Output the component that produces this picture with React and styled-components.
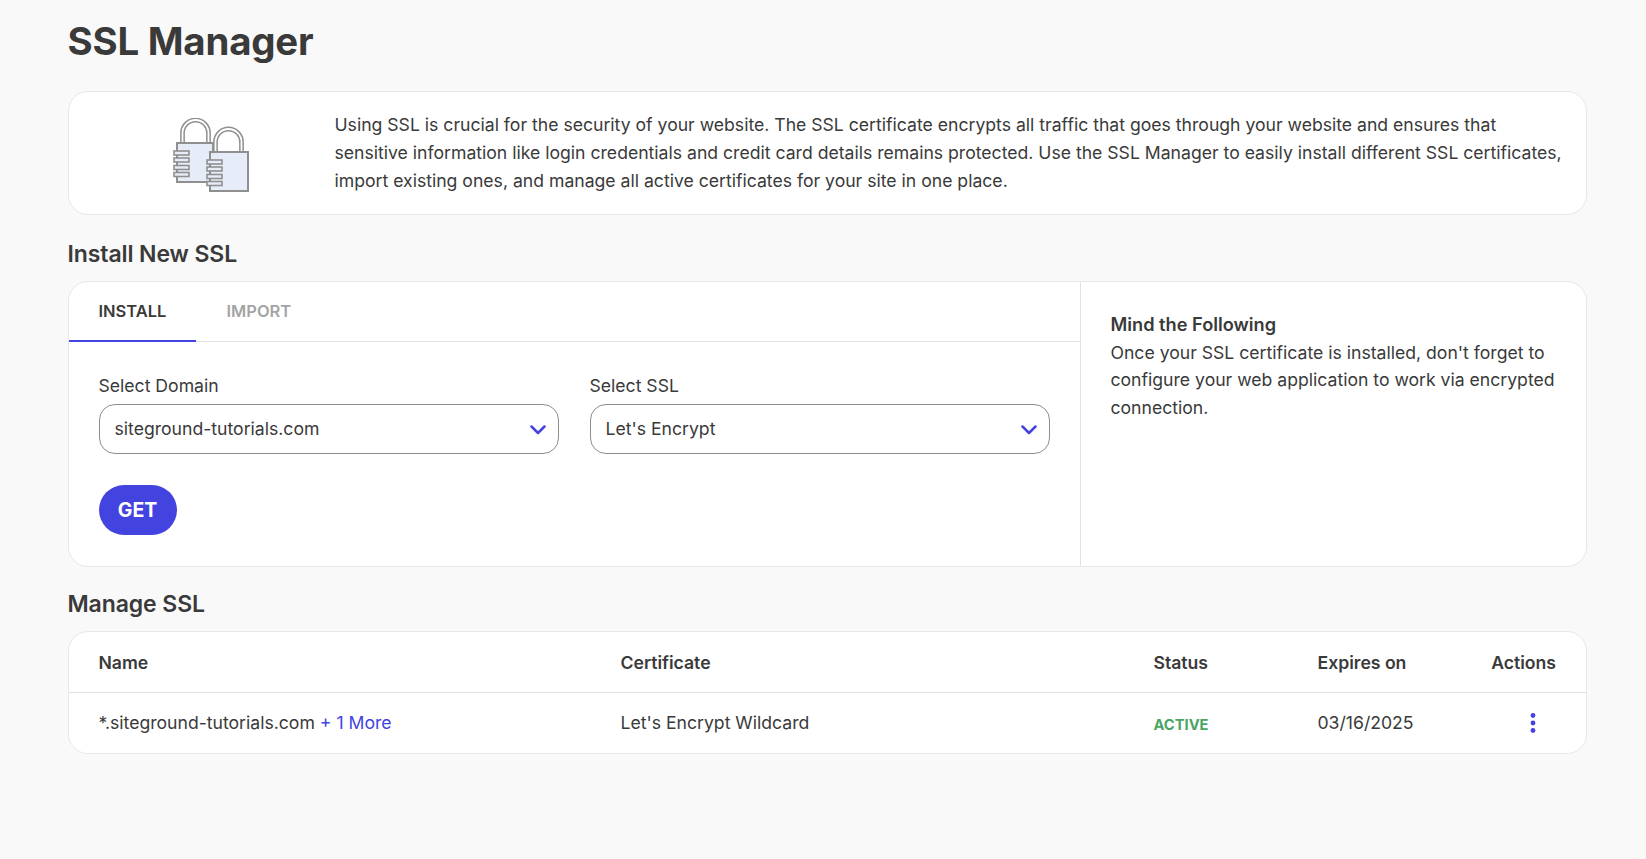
import React from 'react';
import styled, { createGlobalStyle } from 'styled-components';

const GlobalStyle = createGlobalStyle`
  html, body {
    margin: 0;
    background: #f9f9f9;
    color: #3a3a3a;
    font-family: Inter, "Liberation Sans", sans-serif;
    font-size: 17.63px;
  }
  * {
    box-sizing: border-box;
  }
`;

const Page = styled.main`
  width: 1646px;
  min-height: 859px;
  padding: 15px 59px 0 67.5px;
`;

const Title = styled.h1`
  margin: 0 0 24px;
  height: 52px;
  font-size: 38.4px;
  line-height: 52px;
  font-weight: 700;
  letter-spacing: -0.2px;
`;

const SectionTitle = styled.h2`
  margin: 0;
  height: 64px;
  padding-top: 22px;
  font-size: 23px;
  line-height: 30px;
  font-weight: 600;
  letter-spacing: -0.1px;
`;

const Card = styled.section`
  background: #fff;
  border: 1px solid #e8e8e8;
  border-radius: 20px;
  overflow: hidden;
`;

const IntroCard = styled(Card)`
  display: flex;
  align-items: center;
  height: 124px;
  margin-bottom: 2px;
`;

const IntroIcon = styled.div`
  flex: 0 0 266px;
  display: flex;
  justify-content: center;
  padding: 7px 0 0 20px;
`;

const IntroText = styled.p`
  margin: 0;
  padding-right: 20px;
  line-height: 27.7px;
`;

const InstallCard = styled(Card)`
  display: flex;
  height: 286px;
`;

const InstallMain = styled.div`
  flex: 0 0 1012px;
  border-right: 1px solid #e2e2e2;
`;

const Tabs = styled.div`
  display: flex;
  height: 60px;
  border-bottom: 1px solid #e2e2e2;
`;

const Tab = styled.div`
  height: 60px;
  padding: 0 30px;
  display: flex;
  align-items: center;
  font-size: 16.5px;
  font-weight: 600;
  color: ${p => (p.$active ? '#3a3a3a' : '#a4a4a4')};
  border-bottom: 2px solid ${p => (p.$active ? '#4343e0' : 'transparent')};
`;

const Form = styled.div`
  padding: 30px 30px 0;
`;

const Fields = styled.div`
  display: grid;
  grid-template-columns: 1fr 1fr;
  gap: 31px;
`;

const Label = styled.div`
  height: 32px;
  line-height: 28px;
`;

const Select = styled.div`
  height: 50px;
  padding: 0 12px 1px 15px;
  display: flex;
  align-items: center;
  justify-content: space-between;
  border: 1px solid #8e8e8e;
  border-radius: 16px;
  background: #fff;
`;

const GetButton = styled.button`
  display: block;
  margin-top: 31px;
  width: 78px;
  height: 50px;
  border: 0;
  border-radius: 25px;
  background: #4343e0;
  color: #fff;
  font-family: inherit;
  font-size: 19.5px;
  font-weight: 700;
`;

const Aside = styled.aside`
  flex: 1;
  padding: 29px 30px 0;
  line-height: 27.7px;
`;

const AsideTitle = styled.div`
  font-size: 18.2px;
  font-weight: 600;
`;

const Row = styled.div`
  display: grid;
  grid-template-columns: 522px 533px 164px 1fr auto;
  align-items: center;
  padding: 0 30px ${p => (p.$head ? '0' : '1px')};
  height: ${p => (p.$head ? '61px' : '60px')};
  border-bottom: ${p => (p.$head ? '1px solid #e2e2e2' : '0')};
  font-weight: ${p => (p.$head ? 600 : 400)};
`;

const ActionCell = styled.div`
  display: flex;
  justify-content: flex-end;
  padding-right: ${p => (p.$head ? '0' : '20px')};
`;

const More = styled.span`
  color: #4343e0;
`;

const Status = styled.span`
  color: #4aa564;
  font-size: 14.7px;
  font-weight: 700;
  position: relative;
  top: 1px;
`;

const ChevronIcon = styled.svg`
  margin-top: 3px;
`;

const Chevron = () => (
  <ChevronIcon width="16" height="10" viewBox="0 0 16 10" fill="none">
    <path d="M1.5 1.5L8 8l6.5-6.5" stroke="#4343e0" strokeWidth="2.5" strokeLinecap="round" strokeLinejoin="round" />
  </ChevronIcon>
);

const Dots = () => (
  <svg width="6" height="22" viewBox="0 0 6 22" fill="#4343e0">
    <circle cx="3" cy="3.5" r="2.4" />
    <circle cx="3" cy="11" r="2.4" />
    <circle cx="3" cy="18.5" r="2.4" />
  </svg>
);

const Lock = ({ x, y, width }) => (
  <g transform={`translate(${x} ${y})`} stroke="#8f8f8f" fill="none">
    <path d="M7.5 24V14a13 13 0 0 1 26 0v10" strokeWidth="4.8" />
    <path d="M7.5 24V14a13 13 0 0 1 26 0v10" stroke="#fff" strokeWidth="1.8" />
    <rect x="2" y="24" width={width} height="39" fill="#e6edf9" strokeWidth="2" />
    <g fill="#e6edf9" strokeWidth="1.6">
      <rect x="-1" y="32" width="15" height="4" />
      <rect x="-1" y="39" width="15" height="4" />
      <rect x="-1" y="46.5" width="15" height="4" />
      <rect x="-1" y="53.5" width="15" height="4" />
    </g>
  </g>
);

const LocksIcon = () => (
  <svg width="80" height="78" viewBox="0 0 80 78">
    <Lock x={3} y={1} width={36} />
    <Lock x={36} y={10} width={38} />
  </svg>
);

export default function App() {
  return (
    <Page>
      <GlobalStyle />
      <Title>SSL Manager</Title>

      <IntroCard>
        <IntroIcon>
          <LocksIcon />
        </IntroIcon>
        <IntroText>
          Using SSL is crucial for the security of your website. The SSL certificate encrypts all traffic that goes through your website and ensures that sensitive information like login credentials and credit card details remains protected. Use the SSL Manager to easily install different SSL certificates, import existing ones, and manage all active certificates for your site in one place.
        </IntroText>
      </IntroCard>

      <SectionTitle>Install New SSL</SectionTitle>
      <InstallCard>
        <InstallMain>
          <Tabs>
            <Tab $active>INSTALL</Tab>
            <Tab>IMPORT</Tab>
          </Tabs>
          <Form>
            <Fields>
              <div>
                <Label>Select Domain</Label>
                <Select>
                  siteground-tutorials.com
                  <Chevron />
                </Select>
              </div>
              <div>
                <Label>Select SSL</Label>
                <Select>
                  Let's Encrypt
                  <Chevron />
                </Select>
              </div>
            </Fields>
            <GetButton>GET</GetButton>
          </Form>
        </InstallMain>
        <Aside>
          <AsideTitle>Mind the Following</AsideTitle>
          Once your SSL certificate is installed, don't forget to configure your web application to work via encrypted connection.
        </Aside>
      </InstallCard>

      <SectionTitle>Manage SSL</SectionTitle>
      <Card>
        <Row $head>
          <div>Name</div>
          <div>Certificate</div>
          <div>Status</div>
          <div>Expires on</div>
          <ActionCell $head>Actions</ActionCell>
        </Row>
        <Row>
          <div>*.siteground-tutorials.com <More>+ 1 More</More></div>
          <div>Let's Encrypt Wildcard</div>
          <div><Status>ACTIVE</Status></div>
          <div>03/16/2025</div>
          <ActionCell><Dots /></ActionCell>
        </Row>
      </Card>
    </Page>
  );
}
